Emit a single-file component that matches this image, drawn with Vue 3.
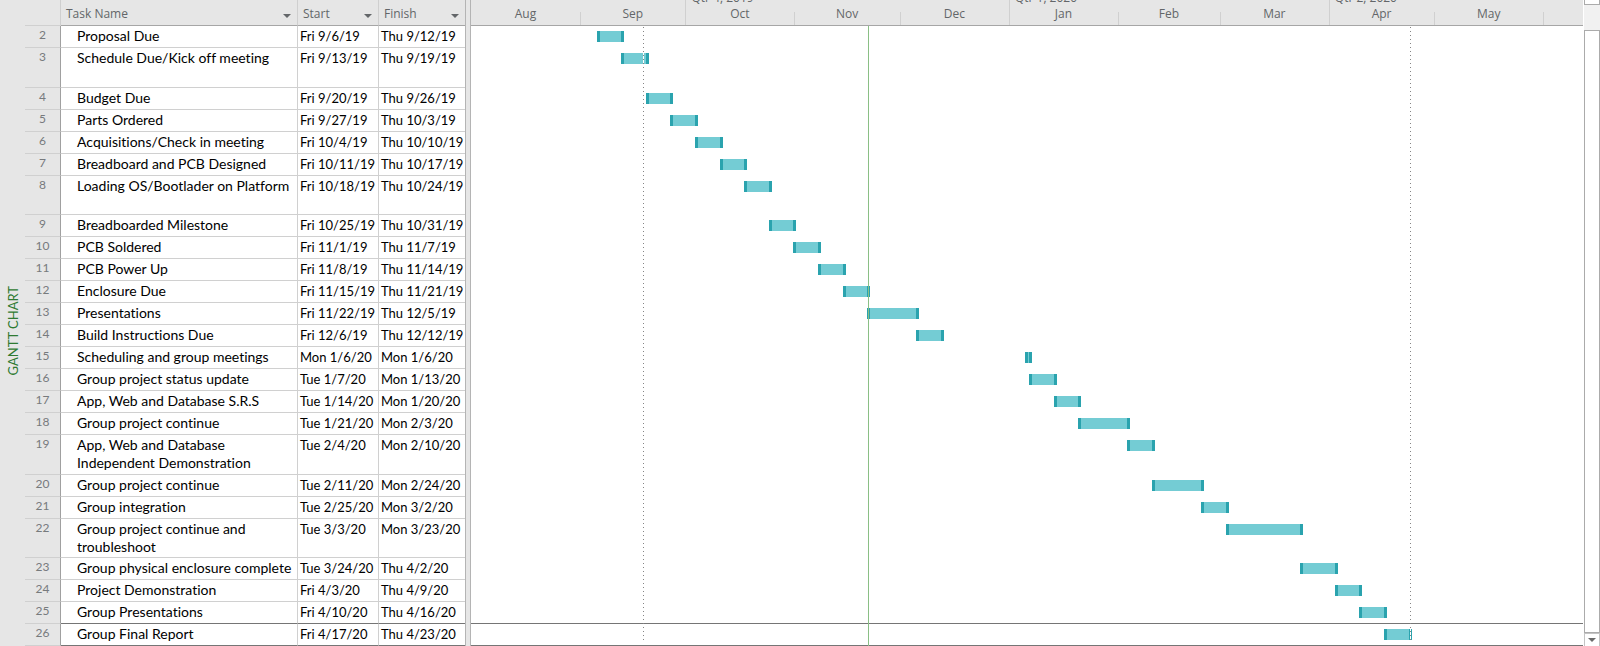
<script setup>
const DAY = 86400000
const ORIGIN = Date.UTC(2019, 7, 1)
const SPAN = 316.3

const months = [
  { name: 'Aug', days: 31, first: true },
  { name: 'Sep', days: 30 },
  { name: 'Oct', days: 31, quarter: 'Qtr 4, 2019' },
  { name: 'Nov', days: 30 },
  { name: 'Dec', days: 31 },
  { name: 'Jan', days: 31, quarter: 'Qtr 1, 2020' },
  { name: 'Feb', days: 29 },
  { name: 'Mar', days: 31 },
  { name: 'Apr', days: 30, quarter: 'Qtr 2, 2020' },
  { name: 'May', days: 31 },
  { name: '', days: 11.3 }
]
const monthColumns = months.map((m) => `minmax(0, ${m.days}fr)`).join(' ')

const columns = [
  { key: 'name', label: 'Task Name' },
  { key: 'start', label: 'Start' },
  { key: 'finish', label: 'Finish' }
]

const tasks = [
  [2, 'Proposal Due', 'Fri 9/6/19', 'Thu 9/12/19'],
  [3, 'Schedule Due/Kick off meeting', 'Fri 9/13/19', 'Thu 9/19/19', 'tall'],
  [4, 'Budget Due', 'Fri 9/20/19', 'Thu 9/26/19'],
  [5, 'Parts Ordered', 'Fri 9/27/19', 'Thu 10/3/19'],
  [6, 'Acquisitions/Check in meeting', 'Fri 10/4/19', 'Thu 10/10/19'],
  [7, 'Breadboard and PCB Designed', 'Fri 10/11/19', 'Thu 10/17/19'],
  [8, 'Loading OS/Bootlader on Platform', 'Fri 10/18/19', 'Thu 10/24/19', 'double'],
  [9, 'Breadboarded Milestone', 'Fri 10/25/19', 'Thu 10/31/19'],
  [10, 'PCB Soldered', 'Fri 11/1/19', 'Thu 11/7/19'],
  [11, 'PCB Power Up', 'Fri 11/8/19', 'Thu 11/14/19'],
  [12, 'Enclosure Due', 'Fri 11/15/19', 'Thu 11/21/19'],
  [13, 'Presentations', 'Fri 11/22/19', 'Thu 12/5/19'],
  [14, 'Build Instructions Due', 'Fri 12/6/19', 'Thu 12/12/19'],
  [15, 'Scheduling and group meetings', 'Mon 1/6/20', 'Mon 1/6/20'],
  [16, 'Group project status update', 'Tue 1/7/20', 'Mon 1/13/20'],
  [17, 'App, Web and Database S.R.S', 'Tue 1/14/20', 'Mon 1/20/20'],
  [18, 'Group project continue', 'Tue 1/21/20', 'Mon 2/3/20'],
  [19, 'App, Web and Database Independent Demonstration', 'Tue 2/4/20', 'Mon 2/10/20', 'tall'],
  [20, 'Group project continue', 'Tue 2/11/20', 'Mon 2/24/20'],
  [21, 'Group integration', 'Tue 2/25/20', 'Mon 3/2/20'],
  [22, 'Group project continue and troubleshoot', 'Tue 3/3/20', 'Mon 3/23/20', 'double'],
  [23, 'Group physical enclosure complete', 'Tue 3/24/20', 'Thu 4/2/20'],
  [24, 'Project Demonstration', 'Fri 4/3/20', 'Thu 4/9/20'],
  [25, 'Group Presentations', 'Fri 4/10/20', 'Thu 4/16/20', 'ruled'],
  [26, 'Group Final Report', 'Fri 4/17/20', 'Thu 4/23/20', 'ruled']
].map(([id, name, start, finish, kind = '']) => ({ id, name, start, finish, kind }))

function dayOf(text) {
  const [m, d, y] = text.split(' ')[1].split('/').map(Number)
  return (Date.UTC(2000 + y, m - 1, d) - ORIGIN) / DAY
}
const pct = (days) => `${(days / SPAN) * 100}%`
function barStyle(task) {
  const from = dayOf(task.start)
  const to = dayOf(task.finish) + 1
  return { left: pct(from), width: `calc(${pct(to - from)} + 3px)` }
}
</script>

<template>
  <main class="project">
    <aside class="view-name"><span>GANTT CHART</span></aside>

    <table class="sheet">
      <colgroup>
        <col class="c-id" />
        <col class="c-name" />
        <col class="c-start" />
        <col class="c-finish" />
      </colgroup>
      <thead>
        <tr>
          <td class="corner"></td>
          <th v-for="c in columns" :key="c.key" scope="col">
            <div class="head">
              <span>{{ c.label }}</span>
              <button type="button" :aria-label="`Filter ${c.label}`">
                <svg width="8" height="4" viewBox="0 0 8 4"><path d="M0 0h8L4 4z" fill="#636669" /></svg>
              </button>
            </div>
          </th>
        </tr>
      </thead>
      <tbody>
        <tr v-for="t in tasks" :key="t.id" :class="['row', t.kind]">
          <th scope="row">{{ t.id }}</th>
          <td class="name">{{ t.name }}</td>
          <td>{{ t.start }}</td>
          <td>{{ t.finish }}</td>
        </tr>
      </tbody>
    </table>

    <div class="splitter"></div>

    <section class="chart" aria-label="Timeline">
      <div class="scale" :style="{ gridTemplateColumns: monthColumns }">
        <div
          v-for="(m, i) in months"
          :key="i"
          :class="['month', { quarter: m.quarter, first: m.first }]"
        >
          <span v-if="m.quarter" class="quarter-name">{{ m.quarter }}</span>
          <span>{{ m.name }}</span>
        </div>
      </div>
      <div class="lanes">
        <div v-for="t in tasks" :key="t.id" :class="['lane', t.kind]">
          <div class="bar" :style="barStyle(t)"></div>
        </div>
        <div class="marker dotted" :style="{ left: pct(48.9) }"></div>
        <div class="marker dotted" :style="{ left: pct(267.1) }"></div>
        <div class="marker today" :style="{ left: pct(112.9) }"></div>
      </div>
    </section>

    <div class="scrollbar">
      <button type="button" class="up" aria-label="Scroll up"></button>
      <div class="track"></div>
      <div class="thumb"></div>
      <button type="button" class="down" aria-label="Scroll down">
        <svg width="8" height="4" viewBox="0 0 8 4"><path d="M0 0h8L4 4z" fill="#6a6a6a" /></svg>
      </button>
    </div>
  </main>
</template>

<style>
body {
  background: #fff;
}
</style>

<style scoped>
.project {
  display: flex;
  align-items: stretch;
  background: #fff;
  color: #000;
  font: 14px/18px Lato, "Liberation Sans", sans-serif;
  font-variant-ligatures: none;
}
.view-name {
  flex: none;
  width: 25px;
  display: flex;
  align-items: center;
  justify-content: center;
  padding-top: 16px;
  box-sizing: border-box;
  background: #e6e6e6;
  color: #2f7a32;
  font-size: 13px;
}
.view-name span {
  writing-mode: vertical-rl;
  transform: rotate(180deg);
  white-space: nowrap;
}
.sheet {
  flex: none;
  width: 440px;
  table-layout: fixed;
  border-collapse: separate;
  border-spacing: 0;
}
.c-id { width: 36px; }
.c-name { width: 237px; }
.c-start { width: 81px; }
.c-finish { width: 86px; }
.sheet th,
.sheet td {
  box-sizing: border-box;
  padding: 0;
  font-weight: 400;
  text-align: left;
  vertical-align: top;
}
.sheet thead th,
.corner {
  height: 26px;
  background: #e6e6e6;
  border-right: 1px solid #cfcfcf;
  border-bottom: 1px solid #a6a6a6;
}
.sheet .corner {
  border-bottom-color: #d0d0d0;
}
.sheet thead th:last-child {
  border-right: 0;
}
.head {
  display: flex;
  justify-content: space-between;
  padding: 5px 6px 0 5px;
  color: #636669;
  font: 12px/18px "Open Sans", "Noto Sans", sans-serif;
}
.head button {
  border: 0;
  padding: 4px 0 0;
  background: none;
  line-height: 0;
}
.row {
  height: 22px;
}
.row.tall { height: 40px; }
.row.double { height: 39px; }
.sheet tbody th {
  background: #e6e6e6;
  border-right: 1px solid #a0a0a0;
  border-bottom: 1px solid #d0d0d0;
  color: #777a7d;
  text-align: center;
  font-size: 12px;
}
.sheet tbody td {
  padding: 1px 0 0 2px;
  border-right: 1px solid #d0d0d0;
  border-bottom: 1px solid #d0d0d0;
  font-size: 13px;
  white-space: nowrap;
}
.sheet tbody td:last-child {
  border-right: 0;
}
.sheet tbody td.name {
  padding-left: 16px;
  font-size: 14px;
  white-space: normal;
}
.sheet tbody .ruled td {
  border-bottom-color: #757575;
}
.splitter {
  flex: none;
  width: 4px;
  background: #e6e6e6;
  border: solid #b4b4b4;
  border-width: 0 1px;
}
.chart {
  flex: 1;
  min-width: 0;
  display: flex;
  flex-direction: column;
}
.scale {
  display: grid;
  height: 25px;
  overflow: hidden;
  background: #e6e6e6;
  border-bottom: 1px solid #a6a6a6;
  color: #636669;
  font: 12px/18px "Open Sans", "Noto Sans", sans-serif;
}
.month {
  position: relative;
  padding-top: 5px;
  text-align: center;
  background: linear-gradient(#d0d0d0, #d0d0d0) left bottom / 1px 13px no-repeat;
}
.month.quarter { background-size: 1px 25px; }
.month.first { background: none; }
.quarter-name {
  position: absolute;
  left: 6px;
  top: -11px;
  white-space: nowrap;
}
.lanes {
  position: relative;
  overflow: hidden;
}
.lane {
  position: relative;
  box-sizing: border-box;
  height: 22px;
}
.lane.tall { height: 40px; }
.lane.double { height: 39px; }
.lane.ruled { border-bottom: 1px solid #757575; }
.bar {
  position: absolute;
  top: 5px;
  height: 11px;
  margin-left: -1px;
  box-sizing: border-box;
  background: #74ccd4;
  border: solid #2aa3ae;
  border-width: 0 3px;
}
.marker {
  position: absolute;
  top: 0;
  bottom: 0;
  width: 1px;
}
.dotted {
  bottom: 4px;
  background: repeating-linear-gradient(#fff 0 1px, #858585 1px 2px, #fff 2px 4px);
}
.today { background: #8abf85; }
.scrollbar {
  flex: none;
  width: 16px;
  margin-left: 1px;
  display: flex;
  flex-direction: column;
  background: #f1f1f1;
}
.scrollbar button,
.thumb {
  box-sizing: border-box;
  padding: 0;
  background: #fff;
  border: 1px solid #ababab;
}
.scrollbar .up {
  height: 5px;
  border-top: 0;
}
.track { height: 25px; }
.thumb { flex: 1; }
.scrollbar .down {
  height: 13px;
  border-width: 1px 1px 0;
  border-color: #c4c4c4;
  line-height: 0;
}
</style>
